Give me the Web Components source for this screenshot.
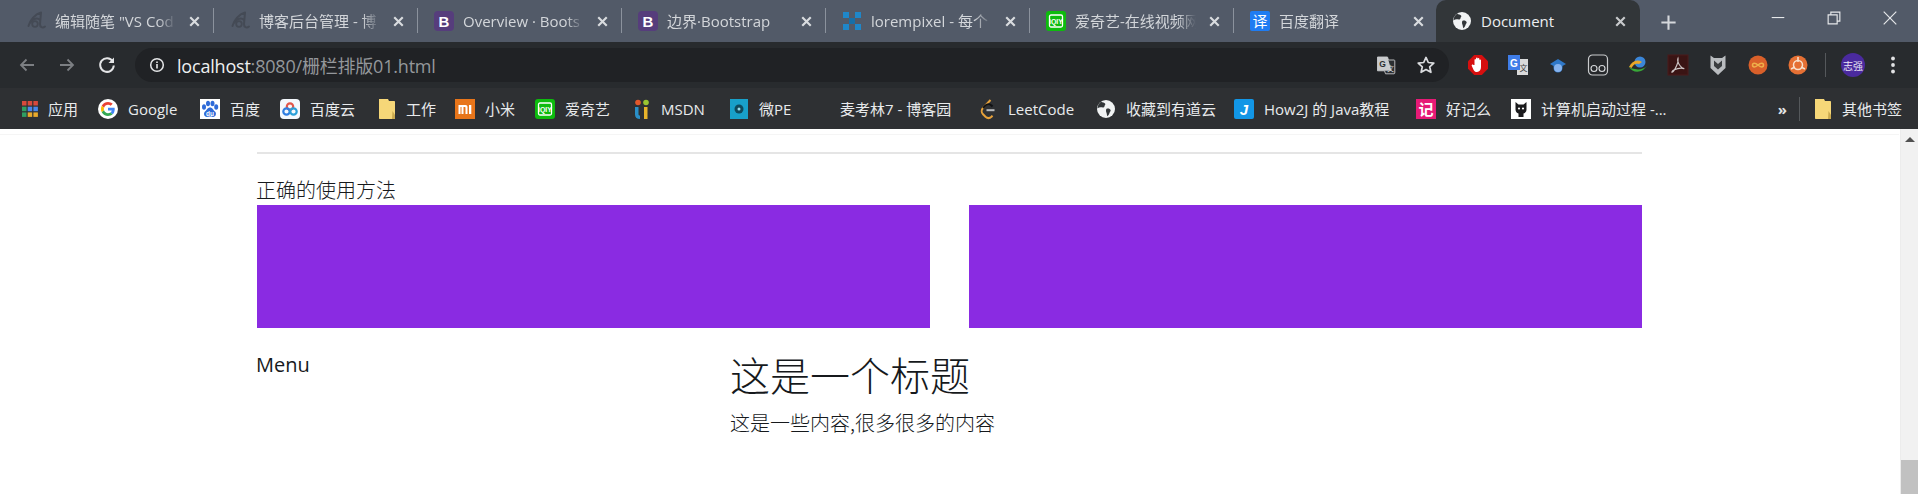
<!doctype html>
<html lang="zh">
<head>
<meta charset="utf-8">
<title>Document</title>
<style>
  html, body { margin: 0; height: 494px; overflow: hidden; background: #fff; }
  body { font-family: "Open Sans", "Noto Sans CJK SC", sans-serif; }
</style>
</head>
<body>

<browser-window>
  <tab-strip>
    <browser-tab icon="cnblogs">编辑随笔 "VS Cod</browser-tab>
    <browser-tab icon="cnblogs">博客后台管理 - 博</browser-tab>
    <browser-tab icon="bootstrap">Overview · Boots</browser-tab>
    <browser-tab icon="bootstrap">边界·Bootstrap</browser-tab>
    <browser-tab icon="lorem">lorempixel - 每个</browser-tab>
    <browser-tab icon="iqiyi">爱奇艺-在线视频网</browser-tab>
    <browser-tab icon="fanyi" last>百度翻译</browser-tab>
    <browser-tab icon="globe" active>Document</browser-tab>
  </tab-strip>
  <tool-bar>
    <address-box>
      <span class="host">localhost</span><span class="rest">:8080/栅栏排版01.html</span>
    </address-box>
  </tool-bar>
  <bookmark-bar>
    <bookmark-item w="78" gap="8" icon="apps">应用</bookmark-item>
    <bookmark-item w="102" icon="google">Google</bookmark-item>
    <bookmark-item w="80" icon="baidu">百度</bookmark-item>
    <bookmark-item w="97" icon="baiduyun">百度云</bookmark-item>
    <bookmark-item w="78" gap="9" icon="folder">工作</bookmark-item>
    <bookmark-item w="80" icon="mi">小米</bookmark-item>
    <bookmark-item w="97" icon="iqiyi">爱奇艺</bookmark-item>
    <bookmark-item w="97" gap="9" icon="msdn">MSDN</bookmark-item>
    <bookmark-item w="81" icon="pe">微PE</bookmark-item>
    <bookmark-item w="168" icon="blank">麦考林7 - 博客园</bookmark-item>
    <bookmark-item w="118" icon="leet">LeetCode</bookmark-item>
    <bookmark-item w="138" icon="globe">收藏到有道云</bookmark-item>
    <bookmark-item w="182" icon="how2j">How2J 的 Java教程</bookmark-item>
    <bookmark-item w="95" icon="ji">好记么</bookmark-item>
    <bookmark-item w="180" icon="github">计算机启动过程 -...</bookmark-item>
    <bookmark-item slot="end" w="90" gap="9" icon="folder">其他书签</bookmark-item>
  </bookmark-bar>
  <page-view>
    <grid-demo></grid-demo>
  </page-view>
</browser-window>

<script>
const FONT = '"Open Sans", "Noto Sans CJK SC", sans-serif';

// all the favicons and toolbar glyphs live here, drawn on a 20x20 box
const ICONS = {
  blank: '',
  cnblogs: `<path d="M15 1.500C9 3 4 9 2.500 15M15 1.500l-1 11.500c-.2 3 2.500 4.500 5 2.500M4.500 11.500c2.500-4 7-5 9.500-2.500" fill="none" stroke="#444a55" stroke-width="2" stroke-linecap="round"/><circle cx="9" cy="13" r="2.800" fill="none" stroke="#444a55" stroke-width="1.800"/>`,
  bootstrap: `<rect x="0" y="0" width="20" height="20" rx="4" fill="#563d7c"/><text x="10" y="15.500" text-anchor="middle" font-size="15" font-weight="700" fill="#fff" font-family="Liberation Sans">B</text>`,
  lorem: `<g fill="#1f87c9"><rect x="1" y="1" width="6" height="6"/><rect x="13" y="1" width="6" height="6"/><rect x="1" y="13" width="6" height="6"/><rect x="13" y="13" width="6" height="6"/><rect x="7" y="7" width="6" height="6" fill="#176fa8"/></g>`,
  iqiyi: `<rect width="20" height="20" rx="3" fill="#0dbb0d"/><rect x="3.500" y="4" width="13" height="12" rx="1.500" fill="none" stroke="#fff" stroke-width="1.300"/><text x="10" y="12.500" text-anchor="middle" font-size="7" font-weight="700" fill="#fff" font-family="Liberation Sans">iQIY</text>`,
  fanyi: `<rect width="20" height="20" rx="2" fill="#1f7cf2"/><text x="10" y="15.500" text-anchor="middle" font-size="15" fill="#fff" font-family="Noto Sans CJK SC">译</text>`,
  globe: `<circle cx="10" cy="10" r="9" fill="#f1f3f4"/><path d="M5 2.800c1.500.8 3.500.8 4.200 2 .5 1-.6 1.500-.8 2.600-.2 1.300-2 1-3.200.8-1.200-.2-2.600.4-3.800 1.200.1-2.700 1.600-5.100 3.600-6.600zM11 9.500c1.500-.4 3.200.2 3.600 1.500.4 1.200-.8 2-1.200 3.200-.3 1-.8 2.200-2 3-.7-1.200-.4-2.700-1.100-4-.5-1.300-.4-3.300.7-3.700z" fill="#323639"/>`,
  apps: `<g><rect x="2" y="2" width="4.500" height="4.500" fill="#d8493c"/><rect x="7.700" y="2" width="4.500" height="4.500" fill="#d8493c"/><rect x="13.400" y="2" width="4.500" height="4.500" fill="#d8493c"/><rect x="2" y="7.700" width="4.500" height="4.500" fill="#2f9e62"/><rect x="7.700" y="7.700" width="4.500" height="4.500" fill="#4a87ea"/><rect x="13.400" y="7.700" width="4.500" height="4.500" fill="#4a87ea"/><rect x="2" y="13.400" width="4.500" height="4.500" fill="#2f9e62"/><rect x="7.700" y="13.400" width="4.500" height="4.500" fill="#e8a92c"/><rect x="13.400" y="13.400" width="4.500" height="4.500" fill="#e8a92c"/></g>`,
  google: `<circle cx="10" cy="10" r="10" fill="#fff"/><g transform="translate(3 3) scale(.2917)"><path fill="#EA4335" d="M24 9.500c3.540 0 6.710 1.220 9.210 3.600l6.850-6.850C35.900 2.380 30.470 0 24 0 14.620 0 6.510 5.380 2.560 13.220l7.980 6.190C12.430 13.720 17.740 9.500 24 9.500z"/><path fill="#4285F4" d="M46.980 24.550c0-1.570-.15-3.090-.38-4.550H24v9.020h12.940c-.58 2.960-2.260 5.480-4.780 7.180l7.730 6c4.510-4.180 7.090-10.360 7.090-17.650z"/><path fill="#FBBC05" d="M10.530 28.590c-.48-1.450-.76-2.990-.76-4.590s.27-3.140.76-4.590l-7.980-6.190C.92 16.460 0 20.120 0 24c0 3.880.92 7.540 2.560 10.780l7.970-6.190z"/><path fill="#34A853" d="M24 48c6.480 0 11.930-2.130 15.890-5.810l-7.730-6c-2.150 1.450-4.920 2.300-8.160 2.300-6.260 0-11.570-4.220-13.470-9.910l-7.980 6.190C6.510 42.620 14.620 48 24 48z"/></g>`,
  baidu: `<rect width="20" height="20" fill="#fff"/><g fill="#2f6bd8"><ellipse cx="4" cy="8" rx="2" ry="2.800"/><ellipse cx="8" cy="4.500" rx="2" ry="2.800"/><ellipse cx="12.500" cy="4.500" rx="2" ry="2.800"/><ellipse cx="16.200" cy="8" rx="2" ry="2.800"/><path d="M10 8.500c-2.500 0-3 2.500-5 4-1.800 1.500-1 5.500 2 5.500 1.500 0 2-.4 3-.4s1.500.4 3 .4c3 0 3.800-4 2-5.500-2-1.500-2.500-4-5-4z"/></g><text x="10" y="16.500" text-anchor="middle" font-size="6.500" font-weight="700" fill="#fff" font-family="Liberation Sans">du</text>`,
  baiduyun: `<rect width="20" height="20" rx="4" fill="#f4f8fd"/><g fill="none" stroke-width="2.200"><circle cx="10" cy="7.500" r="3.200" stroke="#e2574c"/><circle cx="6.500" cy="12.500" r="3.200" stroke="#2f7de1"/><circle cx="13.500" cy="12.500" r="3.200" stroke="#2a9fd8"/></g>`,
  folder: `<path d="M2 0h9l1 2h5c.6 0 1 .4 1 1v16c0 .6-.4 1-1 1H3c-.6 0-1-.4-1-1z" fill="#f6d778"/><path d="M15.500 12l2.500 4v3c0 .6-.4 1-1 1h-2z" fill="#caa94e"/>`,
  mi: `<rect width="20" height="20" fill="#e8751a"/><path d="M3.500 6h7c1.300 0 2 .8 2 2v7h-2V8.500c0-.4-.2-.6-.6-.6H8.500V15h-2V7.900H5.500V15h-2zM14 6h2.300v9H14z" fill="#fff"/>`,
  msdn: `<circle cx="6" cy="3.500" r="2.800" fill="#e2572b"/><circle cx="14" cy="3.500" r="2.800" fill="#9ac531"/><path d="M3 8h3.500v7c0 1 .6 1.500 1.500 1.500V20C5 20 3 18.500 3 15.500z" fill="#2a8fc8"/><path d="M12 8h3.500v12H12z" fill="#e8b32a"/>`,
  pe: `<rect x="1" width="18" height="20" fill="#18a0c9"/><circle cx="10" cy="10" r="4.500" fill="#0f4a5c"/><circle cx="10" cy="10" r="1.500" fill="#9adbe9"/>`,
  leet: `<path d="M12.500 1L5 9c-1.700 1.800-1.700 4.500 0 6.200l2.500 2.500c1.800 1.700 4.300 1.700 6 0l1-1.100" fill="none" stroke="#e6a13a" stroke-width="2"/><path d="M5 9l2.500-2.500c1.700-1.700 4.300-1.700 6 0l1 1" fill="none" stroke="#101113" stroke-width="2"/><path d="M8.500 11.200h8" stroke="#b9bcbf" stroke-width="2"/>`,
  how2j: `<rect width="20" height="20" rx="2" fill="#1296e6"/><text x="10" y="15.500" text-anchor="middle" font-size="15" font-weight="700" font-style="italic" fill="#fff" font-family="Liberation Sans">J</text>`,
  ji: `<rect width="20" height="20" fill="#e61a76"/><text x="10" y="15.500" text-anchor="middle" font-size="15" font-weight="700" fill="#fff" font-family="Noto Sans CJK SC">记</text>`,
  github: `<rect width="20" height="20" fill="#fff"/><path d="M4.500 3l3 2.500h5L15.500 3v7.500c0 2.500-1.500 3.500-3 4v3.500H7.500v-3.500c-1.500-.5-3-1.500-3-4z" fill="#1b1b1d"/><circle cx="8" cy="9.500" r="1.100" fill="#fff"/><circle cx="12" cy="9.500" r="1.100" fill="#fff"/>`,
  back: `<path d="M17 10H4M9.500 4.500L4 10l5.500 5.500" fill="none" stroke="currentColor" stroke-width="1.800"/>`,
  forward: `<path d="M3 10h13M10.500 4.500L16 10l-5.500 5.500" fill="none" stroke="currentColor" stroke-width="1.800"/>`,
  reload: `<path d="M15.700 6.300A6.800 6.800 0 1 0 16.800 10.500" fill="none" stroke="currentColor" stroke-width="2"/><path d="M17 2.500v5.500h-5.500z" fill="currentColor"/>`,
  info: `<circle cx="10" cy="10" r="7" fill="none" stroke="currentColor" stroke-width="1.700"/><path d="M10 9v5M10 6v1.800" stroke="currentColor" stroke-width="1.800"/>`,
  translate: `<path d="M1.500 2h10l1 3h5.500c.5 0 .8.300.8.800V18c0 .5-.3.800-.8.800H9.500l-1-3H1.500z" fill="#2b2e31" stroke="#b8babc" stroke-width="1"/><path d="M1.500 2h10l4 13.800H1.500z" fill="#c9cbcd"/><text x="6.500" y="12" text-anchor="middle" font-size="8.500" font-weight="700" fill="#2b2e31" font-family="Liberation Sans">G</text><text x="14.500" y="16" text-anchor="middle" font-size="7" fill="#d0d2d4" font-family="Noto Sans CJK SC">文</text>`,
  star: `<path d="M10 2.400l2.300 5.100 5.500.6-4.100 3.700 1.200 5.500L10 14.500l-4.900 2.800 1.200-5.500-4.100-3.700 5.500-.6z" fill="none" stroke="#dadcdf" stroke-width="1.700" stroke-linejoin="round"/>`,
  adblock: `<path d="M6.200 0h7.600L20 6.200v7.600L13.800 20H6.200L0 13.800V6.200z" fill="#d60f0f"/><path d="M6.500 10V5c0-1.200 1.500-1.200 1.500 0V3.500c0-1.200 1.700-1.200 1.700 0v.5c0-1.200 1.700-1.200 1.700 0v1.200c0-1.100 1.600-1.100 1.600 0V12c0 2.800-1.500 5-4 5-1.700 0-2.700-.9-3.500-2.300L3.800 11c-.6-1 .8-2 1.600-1z" fill="#fff"/>`,
  gtrans: `<path d="M9 4h11v16H9z" fill="#d9dadb"/><path d="M0 0h12v15H0z" fill="#3f7de8"/><text x="6" y="11.500" text-anchor="middle" font-size="10" font-weight="700" fill="#fff" font-family="Liberation Sans">G</text><text x="15.500" y="16" text-anchor="middle" font-size="8" fill="#444" font-family="Noto Sans CJK SC">文</text>`,
  cap: `<path d="M10 4l8 5-3.500 2v2a4.500 4.500 0 0 1-9 0v-2L2 9z" fill="#2f78c8"/><circle cx="10" cy="13" r="4" fill="#86b3ee"/>`,
  glasses: `<rect x="0.500" y="0" width="19" height="20" rx="4" fill="#26282b" stroke="#c9cbcd" stroke-width="1.200"/><circle cx="6" cy="13.500" r="3" fill="none" stroke="#d7d9db" stroke-width="1.100"/><circle cx="14" cy="13.500" r="3" fill="none" stroke="#d7d9db" stroke-width="1.100"/>`,
  idm: `<circle cx="12" cy="7" r="5.500" fill="#3b86d8"/><path d="M1 12c3-6 8-8 13-5l-3 2c-3-1-5.500 0-7.500 4z" fill="#e8a72a"/><path d="M1 12c3 5 9 6 14 3l4-4c-3 3-8 4-12 3-2 0-4-1-6-2z" fill="#38a838"/>`,
  pdf: `<rect width="20" height="20" fill="#3a1414" stroke="#4a1a1a"/><path d="M10 3.500c-.8 2 .3 5 2.300 7.500 1.200 1.500 3 2.500 4 2.600-2.200-.6-7-.2-10 1.200-1.500.8-2.500 2-2.300 2.500 1-.3 3-3 4.600-6.500.9-2 1.800-5.500 1.400-7.300z" fill="none" stroke="#cfc6c6" stroke-width="1.200"/>`,
  shield: `<path d="M2.500 0.500L6 3h8l3.500-2.500V13L10 20 2.500 13z" fill="#b9bcbf"/><path d="M6 5.500L10 9l4-3.500V11l-4 3.500L6 11z" fill="#3a3d40"/>`,
  orange1: `<circle cx="10" cy="10" r="9.500" fill="#d9602a"/><path d="M4.500 10c0-2.500 3-2.500 5.500 0s5.500 2.500 5.500 0-3-2.500-5.500 0-5.500 2.500-5.500 0z" fill="none" stroke="#eeb04a" stroke-width="1.500"/>`,
  orange2: `<circle cx="10" cy="10" r="9.500" fill="#e57034"/><circle cx="10" cy="10" r="4.500" fill="none" stroke="#f8e2cf" stroke-width="1.500"/><path d="M10 2v5M3 14l4-2M17 14l-4-2" stroke="#f8e2cf" stroke-width="1.500"/>`,
  dots: `<circle cx="10" cy="3.500" r="1.900" fill="#e2e3e5"/><circle cx="10" cy="10" r="1.900" fill="#e2e3e5"/><circle cx="10" cy="16.500" r="1.900" fill="#e2e3e5"/>`,
  min: `<path d="M3 9.500h14" stroke="#e6e8ea" stroke-width="1.200"/>`,
  restore: `<path d="M3.500 6.500h10v10h-10zM6.500 6.500v-3h10v10h-3" fill="none" stroke="#e6e8ea" stroke-width="1.300"/>`,
  closewin: `<path d="M3 3l14 14M17 3L3 17" stroke="#e6e8ea" stroke-width="1.300"/>`,
  plus: `<path d="M10 2.500v15M2.500 10h15" stroke="#d5d8dc" stroke-width="2.200"/>`,
  x: `<path d="M5 5l10 10M15 5L5 15" stroke="currentColor" stroke-width="2.500"/>`
};

class AppIcon extends HTMLElement {
  connectedCallback() {
    if (this.shadowRoot) return;
    const size = this.getAttribute('size') || 20;
    this.attachShadow({mode: 'open'}).innerHTML = `
      <style>
        :host { display: flex; flex: none; align-items: center; justify-content: center; width: ${size}px; height: ${size}px; }
        svg { display: block; width: 100%; height: 100%; overflow: visible; }
      </style>
      <svg viewBox="0 0 20 20">${ICONS[this.getAttribute('name')] || ''}</svg>`;
  }
}

class BrowserWindow extends HTMLElement {
  constructor() {
    super();
    this.attachShadow({mode: 'open'}).innerHTML = `
      <style>
        :host { display: flex; flex-direction: column; height: 494px; font-family: ${FONT}; }
      </style>
      <slot></slot>`;
  }
}

class TabStrip extends HTMLElement {
  constructor() {
    super();
    this.attachShadow({mode: 'open'}).innerHTML = `
      <style>
        :host { display: flex; flex: none; height: 42px; padding-left: 10px; background: #525a68; }
        .new { display: flex; align-items: center; margin: 3px 0 0 17px; }
        .win { display: flex; margin-left: auto; }
        .win span { display: flex; align-items: center; justify-content: center; width: 56px; height: 36px; }
      </style>
      <slot></slot>
      <div class="new"><app-icon name="plus" size="19"></app-icon></div>
      <div class="win">
        <span><app-icon name="min" size="18"></app-icon></span>
        <span><app-icon name="restore" size="18"></app-icon></span>
        <span><app-icon name="closewin" size="18"></app-icon></span>
      </div>`;
  }
}

class BrowserTab extends HTMLElement {
  connectedCallback() {
    if (this.shadowRoot) return;
    this.attachShadow({mode: 'open'}).innerHTML = `
      <style>
        :host { display: flex; flex: none; box-sizing: border-box; position: relative; width: 204px; height: 42px; align-items: center; padding-left: 16px; color: #d3d6da; font-size: 15px; }
        :host([active]) { margin: 0 2px 0 -2px; background: #323639; color: #eceef0; border-radius: 10px 10px 0 0; }
        :host(:not([active]):not([last]))::after { content: ""; position: absolute; right: 0; top: 8px; bottom: 9px; width: 1px; background: #8b929d; }
        .title { flex: none; width: 121px; margin-left: 9px; overflow: hidden; white-space: nowrap; line-height: 42px;
          -webkit-mask-image: linear-gradient(90deg, #000 85%, transparent); }
        :host([active]) .title { -webkit-mask-image: none; }
        .close { margin-left: 10px; color: #d9dcdf; }
        :host([active]) .close { color: #c8cacc; }
      </style>
      <app-icon name="${this.getAttribute('icon')}"></app-icon>
      <span class="title"><slot></slot></span>
      <app-icon class="close" name="x" size="17"></app-icon>`;
  }
}

class ToolBar extends HTMLElement {
  constructor() {
    super();
    const exts = ['adblock', 'gtrans', 'cap', 'glasses', 'idm', 'pdf', 'shield', 'orange1', 'orange2'];
    this.attachShadow({mode: 'open'}).innerHTML = `
      <style>
        :host { display: flex; flex: none; box-sizing: border-box; height: 46px; align-items: center; padding-left: 7px; background: #282b2e; }
        .cell { display: flex; flex: none; align-items: center; justify-content: center; width: 40px; }
        .back { color: #7c7f83; }
        .forward { color: #7c7f83; }
        .reload { color: #e4e5e7; }
        ::slotted(address-box) { flex: 1; margin: 0 9px 0 8px; }
        .sep { flex: none; width: 1px; height: 24px; margin: 0 10px 0 7px; background: #55585b; }
        .avatar { flex: none; display: flex; align-items: center; justify-content: center; width: 24px; height: 24px; margin: 0 5px; border-radius: 50%; background: #4a2a9e; color: #e8e4f4; font-size: 10px; }
        .dots { padding-right: 2px; width: 46px; }
      </style>
      <span class="cell back"><app-icon name="back" size="20"></app-icon></span>
      <span class="cell forward"><app-icon name="forward" size="20"></app-icon></span>
      <span class="cell reload"><app-icon name="reload" size="20"></app-icon></span>
      <slot></slot>
      ${exts.map(n => `<span class="cell"><app-icon name="${n}" size="20"></app-icon></span>`).join('')}
      <span class="sep"></span>
      <span class="avatar">志强</span>
      <span class="cell dots"><app-icon name="dots" size="20"></app-icon></span>`;
  }
}

class AddressBox extends HTMLElement {
  constructor() {
    super();
    this.attachShadow({mode: 'open'}).innerHTML = `
      <style>
        :host { display: flex; box-sizing: border-box; height: 34px; align-items: center; padding: 0 3px 0 13px; border-radius: 17px; background: #202225; font-size: 18px; letter-spacing: -.2px; }
        .info { color: #e4e5e7; margin-right: 11px; }
        .url { flex: 1; white-space: nowrap; }
        ::slotted(.host) { color: #eef0f1; }
        ::slotted(.rest) { color: #94979b; }
        .cell { display: flex; flex: none; align-items: center; justify-content: center; width: 40px; }
      </style>
      <app-icon class="info" name="info" size="18"></app-icon>
      <span class="url"><slot></slot></span>
      <span class="cell"><app-icon name="translate" size="20"></app-icon></span>
      <span class="cell"><app-icon name="star" size="20"></app-icon></span>`;
  }
}

class BookmarkBar extends HTMLElement {
  constructor() {
    super();
    this.attachShadow({mode: 'open'}).innerHTML = `
      <style>
        :host { display: flex; flex: none; height: 41px; align-items: center; padding-left: 20px; background: #2e3033; }
        .end { display: flex; align-items: center; margin-left: auto; padding-right: 15px; }
        .more { color: #e4e5e7; font-size: 15px; font-weight: 700; margin-right: 12px; }
        .sep { width: 1px; height: 24px; background: #55585b; margin-right: 13px; }
      </style>
      <slot></slot>
      <div class="end">
        <span class="more">»</span>
        <span class="sep"></span>
        <slot name="end"></slot>
      </div>`;
  }
}

class BookmarkItem extends HTMLElement {
  connectedCallback() {
    if (this.shadowRoot) return;
    const gap = this.getAttribute('gap') || 10;
    this.attachShadow({mode: 'open'}).innerHTML = `
      <style>
        :host { display: flex; flex: none; align-items: center; width: ${this.getAttribute('w')}px; color: #e8eaec; font-size: 15px; white-space: nowrap; }
        .label { margin-left: ${gap}px; }
      </style>
      <app-icon name="${this.getAttribute('icon')}"></app-icon>
      <span class="label"><slot></slot></span>`;
  }
}

class PageView extends HTMLElement {
  constructor() {
    super();
    this.attachShadow({mode: 'open'}).innerHTML = `
      <style>
        :host { display: flex; flex: 1; min-height: 0; background: #fff; }
        main { flex: 1; min-width: 0; }
        .bar { display: flex; flex-direction: column; flex: none; box-sizing: border-box; width: 18px; background: #f1f1f1; border-left: 1px solid #ececec; }
        .up { width: 0; height: 0; margin: 8px auto 0; border: 5px solid transparent; border-top: 0; border-bottom: 5px solid #505050; }
        .thumb { margin-top: auto; height: 34px; background: #c1c1c1; }
      </style>
      <main><slot></slot></main>
      <div class="bar"><span class="up"></span><span class="thumb"></span></div>`;
  }
}

class GridDemo extends HTMLElement {
  constructor() {
    super();
    this.attachShadow({mode: 'open'}).innerHTML = `
      <style>
        :host { display: block; box-sizing: border-box; padding: 5px 258px 0 257px; color: #16191c; font-size: 20px; line-height: 30px; font-family: "Noto Sans CJK SC", "Open Sans", sans-serif; font-weight: 300; }
        .topline { height: 1px; margin: 0 -257px; background: #f5f5f5; }
        hr { border: 0; height: 2px; margin: 17px 0 21px; background: #e5e5e5; }
        .lead { margin-left: -1px; }
        .two { display: grid; grid-template-columns: 1fr 1fr; gap: 39px; }
        .box { height: 123px; background: #8a2be2; }
        .lower { display: grid; grid-template-columns: 435px 1fr; gap: 39px; margin-top: 22px; }
        .menu { margin-left: -1px; font-family: "Open Sans", sans-serif; font-weight: 400; }
        h1 { margin: 0 0 10px -1px; font-size: 40px; line-height: 48px; font-weight: 300; }
        p { margin: 0 0 0 -1px; }
      </style>
      <div class="topline"></div>
      <hr>
      <div class="lead">正确的使用方法</div>
      <div class="two"><div class="box"></div><div class="box"></div></div>
      <div class="lower">
        <div class="menu">Menu</div>
        <div>
          <h1>这是一个标题</h1>
          <p>这是一些内容,很多很多的内容</p>
        </div>
      </div>`;
  }
}

customElements.define('app-icon', AppIcon);
customElements.define('browser-window', BrowserWindow);
customElements.define('tab-strip', TabStrip);
customElements.define('browser-tab', BrowserTab);
customElements.define('tool-bar', ToolBar);
customElements.define('address-box', AddressBox);
customElements.define('bookmark-bar', BookmarkBar);
customElements.define('bookmark-item', BookmarkItem);
customElements.define('page-view', PageView);
customElements.define('grid-demo', GridDemo);
</script>
</body>
</html>
